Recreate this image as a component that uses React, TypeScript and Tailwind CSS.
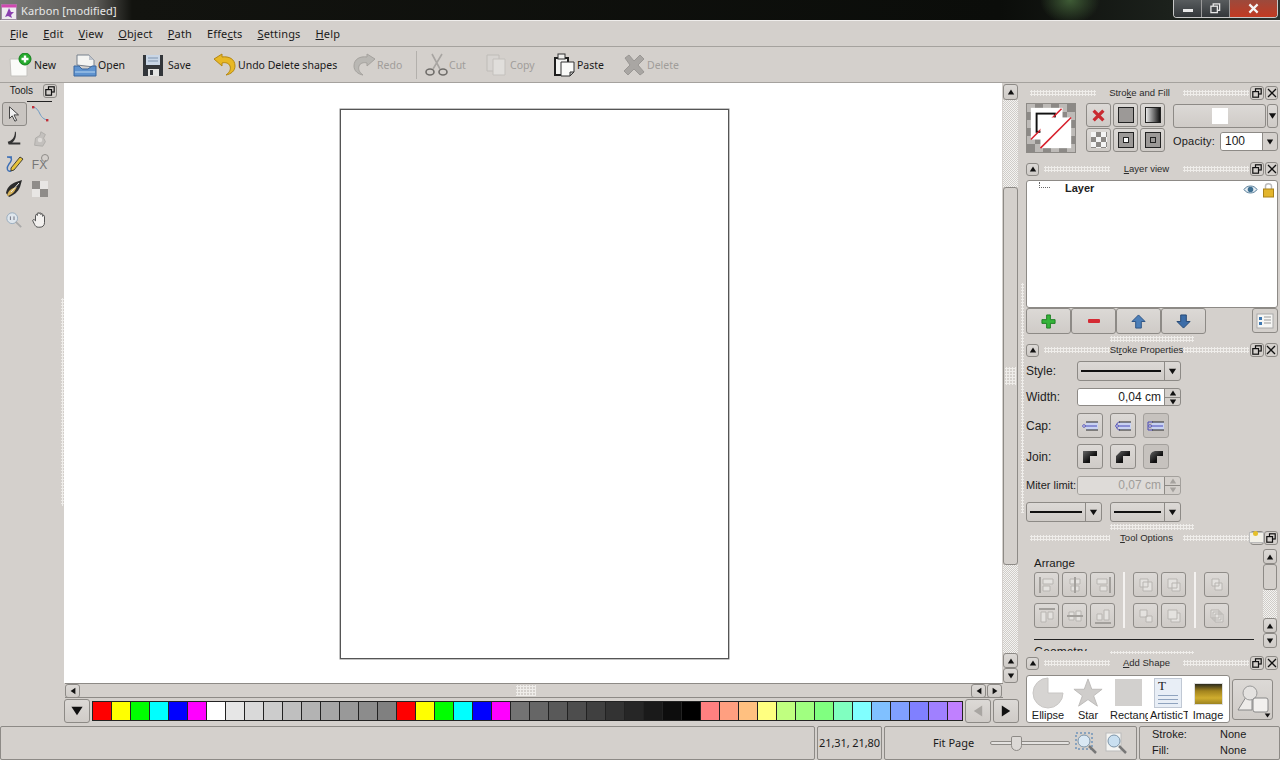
import type { ReactNode } from "react";

const btn = "border border-[#8d8a86] rounded-[3px] bg-[linear-gradient(#dcd9d6,#cfcbc7)] flex items-center justify-center shrink-0";
const grip = "bg-[radial-gradient(#efedea_1px,transparent_1.2px)] bg-[length:3px_3px]";
const hatch = "bg-[repeating-conic-gradient(#cfccc8_0_25%,#f4f3f1_0_50%)] bg-[length:2px_2px]";

function Tri({ dir = "down", color = "#111", size = 9 }: { dir?: "up" | "down" | "left" | "right"; color?: string; size?: number }) {
  const pts = { up: "1,8 5,2 9,8", down: "1,2 5,8 9,2", left: "8,1 2,5 8,9", right: "2,1 8,5 2,9" }[dir];
  return (
    <svg viewBox="0 0 10 10" width={size} height={size}>
      <polygon points={pts} fill={color} />
    </svg>
  );
}

function FloatIcon() {
  return (
    <svg viewBox="0 0 10 10" width="10" height="10" fill="none" stroke="#111" strokeWidth="1.2">
      <rect x="3.5" y="0.8" width="5.7" height="5.2" />
      <rect x="0.8" y="3.6" width="5.7" height="5.6" fill="#d4d0cc" />
    </svg>
  );
}

function CloseIcon() {
  return (
    <svg viewBox="0 0 10 10" width="10" height="10" stroke="#111" strokeWidth="1.3">
      <path d="M1 1L9 9M9 1L1 9" />
    </svg>
  );
}

function DockTitle({ title, collapse = true, close = true, leftDots = "w-[66px]" }: { title: [string, string, string]; collapse?: boolean; close?: boolean; leftDots?: string }) {
  return (
    <div className="h-[14px] flex items-center text-[9.5px] leading-[14px] text-[#2b2b2b] shrink-0">
      {collapse && (
        <div className={`${btn} w-[13px] h-[13px]`}>
          <Tri dir="up" size={8} />
        </div>
      )}
      <div className={`${grip} h-[6px] ${leftDots} ${collapse ? "ml-[5px]" : "ml-[4px]"}`} />
      <div className="flex-1 text-center whitespace-nowrap">
        {title[0]}
        <span className="underline">{title[1]}</span>
        {title[2]}
      </div>
      <div className={`${grip} h-[6px] w-[66px] mr-[1px]`} />
      <div className={`${btn} w-[14px] h-[14px] bg-none`}>
        <FloatIcon />
      </div>
      {close ? (
        <div className={`${btn} w-[13px] h-[14px] ml-[1px] bg-none`}>
          <CloseIcon />
        </div>
      ) : (
        <div className="w-[14px]" />
      )}
    </div>
  );
}

function LineSelect({ w }: { w: string }) {
  return (
    <div className={`${btn} ${w} h-[20px]`}>
      <div className="flex-1 h-[2px] bg-[#111] mx-[3px]" />
      <div className="w-[16px] h-full border-l border-[#8d8a86] flex items-center justify-center">
        <Tri size={9} />
      </div>
    </div>
  );
}

function Spin({ disabled }: { disabled?: boolean }) {
  const c = disabled ? "#a5a29e" : "#111";
  return (
    <div className="w-[16px] h-full border-l border-[#8d8a86] flex flex-col">
      <div className="flex-1 flex items-center justify-center border-b border-[#8d8a86]">
        <Tri dir="up" size={8} color={c} />
      </div>
      <div className="flex-1 flex items-center justify-center">
        <Tri size={8} color={c} />
      </div>
    </div>
  );
}

function I({ children, s = 24 }: { children: ReactNode; s?: number }) {
  return (
    <svg viewBox="0 0 24 24" width={s} height={s} className="shrink-0">
      {children}
    </svg>
  );
}

const toolbar: { label: string; w: string; off?: boolean; icon: ReactNode }[] = [
  {
    label: "New", w: "w-[64px]",
    icon: (
      <I>
        <path d="M1 6H13L18 11V23H2Z" fill="#fbfbf9" stroke="#c4c2be" />
        <circle cx="16" cy="6" r="6" fill="#25a92c" stroke="#13801b" />
        <path d="M16 2.5V9.5M12.5 6H19.5" stroke="#fff" strokeWidth="2.4" />
      </I>
    ),
  },
  {
    label: "Open", w: "w-[70px]",
    icon: (
      <I>
        <path d="M4 12V2H16L21 7V14Z" fill="#f4f4f2" stroke="#77808c" />
        <path d="M16 2V7H21Z" fill="#bfc4cc" />
        <path d="M1 13H6L9 16H15L19 13H23V23H1Z" fill="#5f93cf" stroke="#3b679e" />
        <path d="M2 19H22" stroke="#8cb5e0" strokeWidth="2" />
      </I>
    ),
  },
  {
    label: "Save", w: "w-[70px]",
    icon: (
      <I>
        <path d="M0 2H20V23H0Z" fill="#33363a" />
        <rect x="3" y="2" width="14" height="10" fill="#c9d6e6" />
        <path d="M5 5H15M5 8H15" stroke="#7e93ad" />
        <rect x="5" y="16" width="11" height="7" fill="#e4e4e2" />
        <rect x="7" y="17" width="3" height="5" fill="#33363a" />
      </I>
    ),
  },
  {
    label: "Undo Delete shapes", w: "w-[139px]",
    icon: (
      <I>
        <path d="M1 6L9 1V4C16 3 22 6 22 13C22 18 18 21 13 22C17 19 18 16 17 13C16 10 12 9 9 10V13Z" fill="#e8b825" stroke="#b48712" />
      </I>
    ),
  },
  {
    label: "Redo", w: "w-[64px]", off: true,
    icon: (
      <I>
        <path d="M23 6L15 1V4C8 3 2 6 2 13C2 18 6 21 11 22C7 19 6 16 7 13C8 10 12 9 15 10V13Z" fill="#b9b7b3" stroke="#a5a29e" />
      </I>
    ),
  },
];

const toolbar2: { label: string; w: string; off?: boolean; icon: ReactNode }[] = [
  {
    label: "Cut", w: "w-[61px]", off: true,
    icon: (
      <I>
        <path d="M8 1L16 16M18 1L9 16" stroke="#a8a5a2" strokeWidth="1.6" fill="none" />
        <ellipse cx="6" cy="19" rx="4" ry="3" fill="none" stroke="#6f6d6a" strokeWidth="1.6" />
        <ellipse cx="19" cy="19" rx="4" ry="3" fill="none" stroke="#6f6d6a" strokeWidth="1.6" />
      </I>
    ),
  },
  {
    label: "Copy", w: "w-[67px]", off: true,
    icon: (
      <I>
        <path d="M2 2H14V18H2Z" fill="#d7d4d1" stroke="#bfbcb8" />
        <path d="M8 6H20V22H8Z" fill="#e0dedb" stroke="#c3c0bc" />
      </I>
    ),
  },
  {
    label: "Paste", w: "w-[70px]",
    icon: (
      <I>
        <path d="M2 4H17V23H2Z" fill="#1e1e1e" />
        <path d="M4 6H15V21H4Z" fill="#f3f3f1" />
        <rect x="6" y="1" width="7" height="5" fill="#efefed" stroke="#333" />
        <path d="M9 9H22V19L18 23H9Z" fill="#fafaf8" stroke="#333" />
        <path d="M22 19H18V23Z" fill="#bbb" stroke="#333" />
      </I>
    ),
  },
  {
    label: "Delete", w: "w-[60px]", off: true,
    icon: (
      <I>
        <path d="M3 5L7 2L12 8L18 2L22 6L16 12L22 19L18 22L12 16L6 22L2 18L8 12Z" fill="#a9a6a3" stroke="#9a9794" />
      </I>
    ),
  },
];

function ToolItem({ it }: { it: { label: string; w: string; off?: boolean; icon: ReactNode } }) {
  return (
    <div className={`${it.w} flex items-center gap-[1px] shrink-0`}>
      {it.icon}
      <span className={`text-[10.5px] whitespace-nowrap mt-[2px] ${it.off ? "text-[#a09d9a]" : "text-[#1a1a1a]"}`}>{it.label}</span>
    </div>
  );
}

const leftTools: ReactNode[] = [
  <svg key="a" viewBox="0 0 20 20" width="18" height="18"><path d="M5 2L15 11H10L13 17L11 18L8 12L5 15Z" fill="#f0f0f0" stroke="#333" /></svg>,
  <svg key="b" viewBox="0 0 20 20" width="20" height="20"><path d="M3 3C7 4 8 6 10 10C12 14 14 15 17 16" fill="none" stroke="#6d9ac4" strokeWidth="1" /><rect x="2" y="2" width="2.4" height="2.4" fill="#c0303a" /><rect x="16" y="15" width="2.4" height="2.4" fill="#c0303a" /></svg>,
  <svg key="c" viewBox="0 0 20 20" width="18" height="18"><path d="M11 2C11 8 8 12 3 13L4 16H17V14H8C11 12 13 7 12 2Z" fill="#333" /></svg>,
  <svg key="d" viewBox="0 0 20 20" width="18" height="18"><path d="M4 17L5 9L10 6L11 2L16 5L14 9L16 13L13 18Z" fill="#c3c0bd" stroke="#aeaba8" /><circle cx="10" cy="11" r="2.5" fill="#dedbd8" /></svg>,
  <svg key="e" viewBox="0 0 20 20" width="20" height="20"><path d="M8 3H3C8 3 9 5 5 10C2 14 3 18 7 17" fill="none" stroke="#3d6fb5" strokeWidth="1.4" /><path d="M7 14L16 3L19 5L10 16L7 17Z" fill="#e7c33b" stroke="#222" strokeWidth="0.8" /></svg>,
  <span key="f" className="text-[12px] leading-none text-[#777] font-['Liberation_Sans'] relative mt-[3px]">FX<span className="absolute -top-[5px] right-[-2px] w-[8px] h-[8px] rounded-full border border-[#8f8c89]" /></span>,
  <svg key="g" viewBox="0 0 20 20" width="20" height="20"><path d="M2 14C3 8 7 5 12 3L18 1L16 8C14 13 10 16 5 18Z" fill="#2b2b2b" /><path d="M3 17C4 11 8 9 13 8L10 13C8 15 5 17 3 17Z" fill="#d6b35c" /><path d="M15 4L7 13" stroke="#eee" /></svg>,
  <div key="h" className="w-[16px] h-[16px] grid grid-cols-2 grid-rows-2">
    <div className="bg-[#8f8c89]" /><div className="bg-[#e8e6e4]" /><div className="bg-[#e8e6e4]" /><div className="bg-[#8f8c89]" />
  </div>,
];

const swatches = [
  "#ff0000", "#ffff00", "#00ff00", "#00ffff", "#0000ff", "#ff00ff", "#ffffff", "#e6e6e6", "#d9d9d9", "#cccccc", "#bfbfbf", "#b3b3b3", "#a6a6a6", "#999999", "#8c8c8c", "#808080",
  "#ff0000", "#ffff00", "#00ff00", "#00ffff", "#0000ff", "#ff00ff", "#737373", "#666666", "#595959", "#4d4d4d", "#404040", "#333333", "#262626", "#1a1a1a", "#0d0d0d", "#000000",
  "#ff8080", "#ff9f80", "#ffc080", "#ffff80", "#c0ff80", "#a0ff80", "#80ff80", "#80ffc0", "#80ffff", "#80c0ff", "#80a0ff", "#8080ff", "#a080ff", "#c080ff",
];

function ArrangeBtn({ bar, d }: { bar?: string; d: string }) {
  return (
    <div className={`${btn} w-[25px] h-[25px] border-[#8f8c88]`}>
      <svg viewBox="0 0 18 18" width="18" height="18">
        <path d={d} fill="#e4e2df" stroke="#b8b5b1" strokeWidth="1" />
        {bar && <path d={bar} stroke="#a3a09c" strokeWidth="2" fill="none" />}
      </svg>
    </div>
  );
}

function CapBtn({ d, on }: { d?: string; on?: boolean }) {
  return (
    <div className={`${btn} w-[26px] h-[25px] ${on ? "bg-none bg-[#c6c2be] border-[#a3a09c]" : ""}`}>
      <svg viewBox="0 0 18 12" width="18" height="12" fill="none">
        <rect x="5" y="2" width="12" height="8" fill="#c9d3f2" />
        {d && <path d={d} stroke="#4a4ab8" strokeWidth="1" />}
        <path d="M5 2H17M5 10H17" stroke="#2a2a2a" strokeWidth="1" />
        <path d="M3 6H16" stroke="#4a4ab8" />
        <circle cx="3" cy="6" r="1.3" fill="#fff" stroke="#3434b0" strokeWidth="0.8" />
      </svg>
    </div>
  );
}

function JoinBtn({ d, on }: { d: string; on?: boolean }) {
  return (
    <div className={`${btn} w-[26px] h-[25px] ${on ? "bg-none bg-[#c6c2be] border-[#a3a09c]" : ""}`}>
      <svg viewBox="0 0 16 16" width="16" height="16">
        <defs>
          <linearGradient id="jg" x1="0" y1="0" x2="1" y2="1">
            <stop offset="0" stopColor="#666" />
            <stop offset="0.6" stopColor="#111" />
          </linearGradient>
        </defs>
        <path d={d} fill="url(#jg)" />
      </svg>
    </div>
  );
}

export default function App() {
  return (
    <div className="w-[1280px] h-[760px] overflow-hidden flex flex-col bg-[#d4d0cc] font-['Noto_Sans','Liberation_Sans',sans-serif] text-[#1a1a1a]">
      {/* window title */}
      <div className="h-[20px] flex shrink-0 bg-[radial-gradient(ellipse_30px_24px_at_1070px_0px,#3f5c36_0,transparent_100%),linear-gradient(90deg,#7a7a78_0,#5c5b57_95px,#12130f_132px,#0b0d0a_1000px,#1c211c_1170px,#2c3430_1280px)]">
        <svg viewBox="0 0 16 16" width="16" height="16" className="mt-[4px] ml-[1px] shrink-0">
          <rect x="0.5" y="0.5" width="15" height="15" fill="#eeeaf0" stroke="#9a8aa0" />
          <rect x="0.5" y="0.5" width="15" height="3" fill="#d048b0" />
          <path d="M8 4L10 8L13 8L10 11L11 14L7 12L4 13L6 9Z" fill="#8a3fb0" />
        </svg>
        <span className="ml-[4px] text-[11px] tracking-[0.1px] leading-[22px] text-[#e8e8e8]">Karbon [modified]</span>
        <div className="ml-auto mr-[2px] flex h-[18px] border border-t-0 border-[#c8c8c8] rounded-b-[4px] overflow-hidden">
          <div className="w-[28px] border-r border-[#9a9a9a] bg-[linear-gradient(#585c5e,#33373a)] flex items-center justify-center">
            <div className="w-[10px] h-[3px] bg-[#e8e8e8] mt-[4px]" />
          </div>
          <div className="w-[28px] border-r border-[#9a9a9a] bg-[linear-gradient(#585c5e,#33373a)] flex items-center justify-center">
            <svg viewBox="0 0 12 12" width="11" height="11" fill="none" stroke="#e8e8e8" strokeWidth="1.4"><rect x="3.5" y="1" width="7" height="7" /><rect x="1" y="3.5" width="7" height="7" fill="#43474a" /></svg>
          </div>
          <div className="w-[47px] bg-[linear-gradient(#9c4a3c,#c23a22)] flex items-center justify-center">
            <svg viewBox="0 0 12 12" width="11" height="11" stroke="#f4f4f4" strokeWidth="2.4"><path d="M1.5 1.5L10.5 10.5M10.5 1.5L1.5 10.5" /></svg>
          </div>
        </div>
      </div>
      <div className="h-[1px] bg-[#f0eeec] shrink-0" />

      {/* menu */}
      <div className="h-[26px] flex items-center pl-[10px] pt-[1px] gap-[15px] text-[11px] tracking-[0.15px] border-b border-[#a5a29e] shrink-0">
        <span><u>F</u>ile</span>
        <span><u>E</u>dit</span>
        <span><u>V</u>iew</span>
        <span><u>O</u>bject</span>
        <span><u>P</u>ath</span>
        <span>Effe<u>c</u>ts</span>
        <span><u>S</u>ettings</span>
        <span><u>H</u>elp</span>
      </div>

      {/* toolbar */}
      <div className="h-[36px] flex items-center pl-[9px] border-b border-[#a5a29e] shrink-0">
        {toolbar.map((it) => <ToolItem key={it.label} it={it} />)}
        <div className="w-[1px] h-[28px] bg-[#f2f0ee] border-l border-[#b3b0ac] mr-[7px] shrink-0" />
        {toolbar2.map((it) => <ToolItem key={it.label} it={it} />)}
      </div>

      <div className="flex-1 min-h-0 flex">
        {/* tools dock */}
        <div className="w-[64px] shrink-0 flex">
          <div className="w-[58px] shrink-0">
            <div className="h-[18px] flex items-start pt-[1px] justify-end gap-[10px] pr-[1px] text-[10px] leading-[14px] font-['Liberation_Sans',sans-serif]">
              <span>Tools</span>
              <div className={`${btn} w-[14px] h-[14px] bg-none`}><FloatIcon /></div>
            </div>
            <div className="grid grid-cols-[26px_25px] auto-rows-[25px] ml-[1px] items-center justify-items-center">
              <div className="w-[25px] h-[24px] border border-[#8d8a86] rounded-[3px] bg-[#c9c5c1] flex items-center justify-center">{leftTools[0]}</div>
              <div className="border-t border-[#222] w-full h-full flex items-center justify-center">{leftTools[1]}</div>
              {leftTools.slice(2)}
              <svg viewBox="0 0 20 20" width="18" height="18" className="mt-[12px]"><circle cx="8" cy="8" r="6" fill="#dfe6ec" stroke="#94a9bd" /><path d="M12 12L18 18" stroke="#aaa" strokeWidth="2" /><path d="M6 6V10M10 6V10" stroke="#667" /></svg>
              <svg viewBox="0 0 20 20" width="18" height="18" className="mt-[12px]"><path d="M5 11V5C5 3.5 7 3.5 7 5V3C7 1.5 9 1.5 9 3V3C9 1.5 11 1.5 11 3V4C11 2.5 13 2.5 13 4V6C13 4.5 15 4.5 15 6V13C15 16 13 18 10 18H8C6 18 5 17 4 15L2 11C1.5 9.5 3.5 9 4 10Z" fill="#f2f0ee" stroke="#444" /></svg>
            </div>
          </div>
          <div className="flex-1 flex items-center">
            <div className={`${grip} w-[3px] h-[208px] ml-[3px] mt-[-6px]`} />
          </div>
        </div>

        {/* canvas column */}
        <div className="w-[955px] shrink-0 flex flex-col">
          <div className="h-[600px] flex shrink-0">
            <div className="w-[938px] bg-white pl-[276px] pt-[26px] shrink-0">
              <div className="w-[389px] h-[550px] border border-[#555] bg-white shadow-[0_0_0_0.5px_#888]" />
            </div>
            <div className="flex-1 flex flex-col items-center">
              <div className={`${btn} w-[15px] h-[16px] mt-[1px]`}><Tri dir="up" size={8} /></div>
              <div className={`${hatch} w-[15px] h-[87px]`} />
              <div className={`${btn} w-[15px] h-[378px] flex-col bg-none bg-[#d4d0cc]`}>
                <div className={`${grip} w-[11px] h-[18px]`} />
              </div>
              <div className={`${hatch} w-[15px] flex-1`} />
              <div className={`${btn} w-[15px] h-[15px]`}><Tri dir="up" size={8} /></div>
              <div className={`${btn} w-[15px] h-[15px]`}><Tri size={8} /></div>
            </div>
          </div>
          <div className="h-[15px] flex items-center border-y border-[#8d8a86] ml-[1px] mr-[16px] shrink-0 pr-[1px]">
            <div className={`${btn} w-[15px] h-[14px]`}><Tri dir="left" size={8} /></div>
            <div className="flex-1 flex justify-center">
              <div className={`${grip} w-[20px] h-[11px]`} />
            </div>
            <div className={`${btn} w-[15px] h-[14px]`}><Tri dir="left" size={8} /></div>
            <div className={`${btn} w-[15px] h-[14px] ml-[1px]`}><Tri dir="right" size={8} /></div>
          </div>
          <div className="flex items-center mt-[1px] h-[24px] shrink-0">
            <div className={`${btn} w-[26px] h-[24px]`}><Tri size={14} /></div>
            <div className="ml-[2px] w-[871px] h-[20px] flex overflow-hidden border border-[#222] shrink-0">
              {swatches.map((c, i) => (
                <div key={i} className="w-[19px] shrink-0 border-r border-[#222]" style={{ backgroundColor: c }} />
              ))}
            </div>
            <div className={`${btn} w-[26px] h-[24px] ml-[2px]`}><Tri dir="left" size={14} color="#a9a6a2" /></div>
            <div className={`${btn} w-[26px] h-[24px] ml-[2px]`}><Tri dir="right" size={14} /></div>
          </div>
        </div>

        {/* right docks */}
        <div className="flex-1 min-w-0 flex flex-col pl-[7px] pr-[2px] pt-[3px] text-[11px] font-['Liberation_Sans',sans-serif] relative">
          <div className={`${grip} absolute left-[2px] top-[200px] w-[3px] h-[230px]`} />

          <DockTitle title={["Stro", "k", "e and Fill"]} collapse={false} />
          <div className="h-[62px] flex pt-[3px] shrink-0">
            <div className="w-[50px] h-[50px] border border-[#8d8a86] bg-[repeating-conic-gradient(#8c8986_0_25%,#bdbab7_0_50%)] bg-[length:16px_16px] flex shrink-0">
              <svg viewBox="0 0 50 50" width="48" height="48">
                <rect x="4" y="4" width="33" height="33" fill="#fff" />
                <rect x="10" y="10" width="19" height="19" fill="none" stroke="#111" strokeWidth="2" />
                <path d="M4 37L36 5" stroke="#d8202c" strokeWidth="1.6" />
                <rect x="14" y="14" width="32" height="32" fill="#fff" />
                <path d="M14 46L46 14" stroke="#d8202c" strokeWidth="1.6" />
              </svg>
            </div>
            <div className="ml-[10px] grid grid-cols-[25px_25px_25px] auto-rows-[24px] gap-x-[2px] gap-y-[1px] shrink-0 h-[49px]">
              <div className={`${btn}`}><svg viewBox="0 0 12 12" width="13" height="13" stroke="#c92a30" strokeWidth="3"><path d="M1.5 1.5L10.5 10.5M10.5 1.5L1.5 10.5" /></svg></div>
              <div className={`${btn}`}><div className="w-[16px] h-[16px] bg-[#9c9997] border border-[#222]" /></div>
              <div className={`${btn}`}><div className="w-[16px] h-[16px] bg-[linear-gradient(90deg,#e8e8e8,#111)] border border-[#222]" /></div>
              <div className={`${btn}`}><div className="w-[16px] h-[16px] bg-[repeating-conic-gradient(#8c8986_0_25%,#f4f4f4_0_50%)] bg-[length:10px_10px]" /></div>
              <div className={`${btn}`}><div className="w-[16px] h-[16px] bg-[#9c9997] border border-[#222] flex items-center justify-center"><div className="w-[6px] h-[6px] bg-white border border-[#222]" /></div></div>
              <div className={`${btn}`}><div className="w-[16px] h-[16px] bg-[#9c9997] border border-[#222] flex items-center justify-center"><div className="w-[6px] h-[6px] bg-[#9c9997] border border-[#222]" /></div></div>
            </div>
            <div className="ml-[8px] flex-1">
              <div className="flex h-[24px] mt-[1px]">
                <div className={`${btn} w-[93px] h-[24px]`}><div className="w-[16px] h-[16px] bg-white" /></div>
                <div className={`${btn} w-[11px] h-[24px] ml-[1px]`}><Tri size={10} /></div>
              </div>
              <div className="flex items-center mt-[4px] h-[19px]">
                <span className="w-[47px] text-[11px] tracking-[0.2px]">Opacity:</span>
                <div className="w-[58px] h-[19px] border border-[#8d8a86] rounded-[3px] flex items-center overflow-hidden">
                  <div className="flex-1 bg-white h-full pl-[4px] text-[12px] leading-[17px]">100</div>
                  <div className="w-[15px] h-full border-l border-[#8d8a86] flex items-center justify-center"><Tri size={8} /></div>
                </div>
              </div>
            </div>
          </div>

          <DockTitle title={["", "L", "ayer view"]} />
          <div className="h-[4px] shrink-0" />
          <div className="h-[128px] bg-white border border-[#8d8a86] rounded-[3px] flex items-start pl-[4px] pr-[2px] pt-[1px] shrink-0">
            <div className="w-[11px] h-[6px] border-l border-b border-dotted border-[#666] ml-[8px]" />
            <span className="ml-[15px] font-bold text-[11px] text-[#222] leading-[13px]">Layer</span>
            <svg viewBox="0 0 16 14" width="15" height="13" className="ml-auto mt-[1px]"><path d="M1 7C4 2 12 2 15 7C12 12 4 12 1 7Z" fill="#e6eef4" stroke="#4a7290" /><circle cx="8" cy="7" r="3" fill="#3d6f92" /></svg>
            <svg viewBox="0 0 12 16" width="13" height="16" className="ml-[4px]"><path d="M3 7V4C3 1 9 1 9 4V7" fill="none" stroke="#bbb" strokeWidth="1.5" /><rect x="1" y="7" width="10" height="8" fill="#e3b52c" stroke="#a9821a" /></svg>
          </div>
          <div className="flex h-[26px] shrink-0">
            {[
              <svg key="1" viewBox="0 0 16 16" width="15" height="15"><path d="M6 1H10V6H15V10H10V15H6V10H1V6H6Z" fill="#35b43a" stroke="#1a7f20" /></svg>,
              <div key="2" className="w-[12px] h-[4px] rounded-[1px] bg-[#d52b34]" />,
              <svg key="3" viewBox="0 0 16 16" width="15" height="15"><path d="M8 1L15 8H11V15H5V8H1Z" fill="#4d7fb8" stroke="#2b5183" /></svg>,
              <svg key="4" viewBox="0 0 16 16" width="15" height="15"><path d="M8 15L15 8H11V1H5V8H1Z" fill="#3c6da8" stroke="#234673" /></svg>,
            ].map((c, i) => (
              <div key={i} className={`${btn} w-[45px] h-[26px]`}>{c}</div>
            ))}
            <div className={`${btn} w-[26px] h-[25px] ml-auto bg-none`}>
              <svg viewBox="0 0 18 16" width="18" height="16"><rect x="1" y="1" width="16" height="14" fill="#f6f6f4" stroke="#aaa" /><rect x="3" y="4" width="3" height="3" fill="#3e77b0" /><rect x="3" y="9" width="3" height="3" fill="#3e77b0" /><path d="M8 4H15M8 7H15M8 10H15" stroke="#999" /></svg>
            </div>
          </div>
          <div className="h-[9px] flex items-center justify-center shrink-0"><div className={`${grip} h-[6px] w-[84px]`} /></div>
          <DockTitle title={["St", "r", "oke Properties"]} />

          <div className="text-[12px] text-[#222] flex flex-col shrink-0">
            <div className="h-[4px]" />
            <div className="h-[20px] flex items-center">
              <span className="w-[51px]">Style:</span>
              <LineSelect w="w-[104px]" />
            </div>
            <div className="h-[7px]" />
            <div className="h-[18px] flex items-center">
              <span className="w-[51px]">Width:</span>
              <div className="w-[104px] h-[18px] border border-[#8d8a86] rounded-[3px] flex overflow-hidden">
                <div className="flex-1 bg-white text-right pr-[3px] leading-[16px]">0,04 cm</div>
                <Spin />
              </div>
            </div>
            <div className="h-[7px]" />
            <div className="h-[25px] flex items-center">
              <span className="w-[51px]">Cap:</span>
              <div className="flex gap-[7px]">
                <CapBtn />
                <CapBtn d="M6 2C1 2 1 10 6 10" />
                <CapBtn on d="M6 2H1V10H6" />
              </div>
            </div>
            <div className="h-[6px]" />
            <div className="h-[25px] flex items-center">
              <span className="w-[51px]">Join:</span>
              <div className="flex gap-[7px]">
                <JoinBtn d="M1 2H15V7H8V14H1Z" />
                <JoinBtn d="M6 2H15V7H8V14H1V7Z" />
                <JoinBtn on d="M8 2H15V7H9V14H2V8C2 4 5 2 8 2Z" />
              </div>
            </div>
            <div className="h-[7px]" />
            <div className="h-[19px] flex items-center">
              <span className="w-[51px] whitespace-nowrap text-[11px]">Miter limit:</span>
              <div className="w-[104px] h-[19px] border border-[#a3a09c] rounded-[3px] flex overflow-hidden">
                <div className="flex-1 bg-[#dedbd8] text-[#a09d9a] text-right pr-[3px] leading-[17px]">0,07 cm</div>
                <Spin disabled />
              </div>
            </div>
            <div className="h-[7px]" />
            <div className="flex gap-[8px]">
              <LineSelect w="w-[76px]" />
              <LineSelect w="w-[71px]" />
            </div>
          </div>

          <div className="h-[9px] flex items-center justify-center shrink-0"><div className={`${grip} h-[6px] w-[84px]`} /></div>
          <div className="relative">
            <DockTitle title={["", "T", "ool Options"]} collapse={false} close={false} leftDots="w-[80px]" />
            <div className="absolute right-[14px] top-[1px] w-[15px] h-[11px] bg-[#f2f0e8] border border-[#bbb]">
              <div className="absolute -top-[2px] left-[3px] w-[5px] h-[5px] rounded-full bg-[#e6c02a]" />
            </div>
            <div className={`${btn} absolute right-0 top-0 w-[14px] h-[14px] bg-none`}><FloatIcon /></div>
          </div>
          <div className="h-[106px] flex shrink-0 overflow-hidden">
            <div className="flex-1 pl-[8px] text-[11px]">
              <div className="h-[26px] pt-[12px] leading-[14px] mt-[-1px] text-[11.5px]">Arrange</div>
              <div className="flex h-[56px] mt-[2px]">
                <div className="grid grid-cols-3 gap-x-[3px] gap-y-[6px] w-[81px]">
                  <ArrangeBtn bar="M2 1V17" d="M5 3H15V8H5ZM5 10H12V15H5Z" />
                  <ArrangeBtn bar="M9 1V17" d="M4 3H14V8H4ZM5 10H13V15H5Z" />
                  <ArrangeBtn bar="M16 1V17" d="M3 3H13V8H3ZM6 10H13V15H6Z" />
                  <ArrangeBtn bar="M1 2H17" d="M3 5H8V15H3ZM10 5H15V12H10Z" />
                  <ArrangeBtn bar="M1 9H17" d="M3 5H8V13H3ZM10 4H15V14H10Z" />
                  <ArrangeBtn bar="M1 16H17" d="M3 7H8V13H3ZM10 3H15V13H10Z" />
                </div>
                <div className="w-[2px] h-[56px] bg-[#f4f2f0] ml-[8px] mr-[8px]" />
                <div className="grid grid-cols-2 gap-x-[3px] gap-y-[6px] w-[53px]">
                  <ArrangeBtn d="M6 6H15V15H6ZM3 3H11V11H3Z" />
                  <ArrangeBtn d="M3 3H12V12H3ZM7 7H15V15H7Z" />
                  <ArrangeBtn d="M3 3H10V10H3ZM9 9H15V15H9Z" />
                  <ArrangeBtn d="M3 3H12V12H3ZM12 6H15V15H6V12" />
                </div>
                <div className="w-[2px] h-[56px] bg-[#f4f2f0] ml-[8px] mr-[8px]" />
                <div className="flex flex-col gap-[6px]">
                  <ArrangeBtn d="M4 3H11V10H4ZM7 7H14V14H7Z" />
                  <ArrangeBtn d="M3 3H11V11H3ZM7 7H15V15H7ZM5 5H13V13H5Z" />
                </div>
              </div>
              <div className="h-[1px] bg-[#222] mt-[11px] mr-[9px]" />
              <div className="leading-[14px] mt-[5px] text-[12px]">Geometry</div>
            </div>
            <div className="w-[14px] mr-[1px] flex flex-col mt-[4px]">
              <div className={`${btn} w-[14px] h-[15px]`}><Tri dir="up" size={8} /></div>
              <div className={`${btn} w-[14px] h-[26px] bg-none`} />
              <div className={`${hatch} w-[14px] h-[28px] shrink-0`} />
              <div className={`${btn} w-[14px] h-[15px]`}><Tri dir="up" size={8} /></div>
              <div className={`${btn} w-[14px] h-[15px]`}><Tri size={8} /></div>
            </div>
          </div>
          <div className="h-[5px] flex items-start justify-center shrink-0"><div className={`${grip} h-[3px] w-[84px]`} /></div>
          <DockTitle title={["", "A", "dd Shape"]} />
          <div className="flex items-center mt-[5px]">
            <div className="w-[204px] h-[48px] bg-white border border-[#8d8a86] rounded-[3px] flex overflow-hidden pl-[1px] shrink-0 text-[11px]">
              {[
                { name: "Ellipse", icon: <svg viewBox="0 0 32 32" width="32" height="32"><path d="M16 1A15 15 0 1 0 31 16H16Z" fill="#d6d4d2" stroke="#c8c6c4" /></svg> },
                { name: "Star", icon: <svg viewBox="0 0 32 32" width="30" height="30"><path d="M16 1L20 12L31 12L22 19L26 30L16 23L6 30L10 19L1 12L12 12Z" fill="#cfcdcb" stroke="#bcbab8" /></svg> },
                { name: "Rectangle", icon: <div className="w-[27px] h-[27px] bg-[#d2d0ce]" /> },
                { name: "ArtisticText", icon: <div className="w-[28px] h-[30px] bg-[#e8eef6] border border-[#c0c8d4] text-[13px] leading-[13px] font-['Liberation_Serif',serif] pl-[3px] text-[#222]">T<div className="h-[1px] bg-[#8fa3be] mt-[3px] mr-[3px]" /><div className="h-[1px] bg-[#8fa3be] mt-[3px] mr-[3px]" /><div className="h-[1px] bg-[#8fa3be] mt-[3px] mr-[3px]" /></div> },
                { name: "Image", icon: <div className="w-[29px] h-[22px] border border-[#ddd] bg-[linear-gradient(#2b2a1c,#a3841e_35%,#d0ad2e_70%,#9c8320)] mt-[3px]" /> },
              ].map((s) => (
                <div key={s.name} className="w-[40px] shrink-0 flex flex-col items-center overflow-hidden">
                  <div className="h-[33px] flex items-center justify-center shrink-0">{s.icon}</div>
                  <div className={`whitespace-nowrap leading-[13px] ${s.name.length > 7 ? "self-start pl-[2px]" : ""}`}>{s.name}</div>
                </div>
              ))}
            </div>
            <div className={`${btn} w-[41px] h-[41px] ml-[2px] relative`}>
              <svg viewBox="0 0 32 32" width="32" height="32"><path d="M1 27L9 14H15V27Z" fill="#eeecea" stroke="#888" /><circle cx="13" cy="10" r="7" fill="#e4e2e0" stroke="#999" /><rect x="16" y="15" width="15" height="14" rx="2" fill="#f2f0ee" stroke="#888" /></svg>
              <div className="absolute right-[1px] bottom-0"><Tri size={7} /></div>
            </div>
          </div>
        </div>
      </div>

      {/* status bar */}
      <div className="h-[34px] flex gap-[2px] shrink-0 text-[11px] mt-[-1px]">
        <div className="w-[815px] border border-[#8d8a86] rounded-[2px]" />
        <div className="w-[65px] border border-[#8d8a86] rounded-[2px] flex items-center justify-center whitespace-nowrap tracking-[-0.1px]">21,31, 21,80</div>
        <div className="w-[253px] border border-[#8d8a86] rounded-[2px] flex items-center pl-[48px]">
          <span className="whitespace-nowrap">Fit Page</span>
          <div className="w-[80px] h-[4px] ml-[16px] border border-[#8d8a86] rounded-[2px] bg-[#e4e2e0] flex items-center pl-[20px] shrink-0">
            <div className="w-[11px] h-[15px] border border-[#8d8a86] rounded-b-[6px] rounded-t-[2px] bg-[#dcd9d6] shrink-0" />
          </div>
          <svg viewBox="0 0 24 24" width="24" height="24" className="ml-[4px] shrink-0"><rect x="2" y="2" width="16" height="16" fill="none" stroke="#3e77b0" strokeDasharray="2 2" /><circle cx="10" cy="10" r="6" fill="#d9e8f4" stroke="#7c94a8" /><path d="M15 15L22 22" stroke="#777" strokeWidth="2.5" /></svg>
          <svg viewBox="0 0 24 24" width="24" height="24" className="ml-[6px] shrink-0"><rect x="2" y="2" width="15" height="18" fill="#f4f4f2" stroke="#bbb" /><circle cx="10" cy="10" r="6" fill="#c9dff0" stroke="#7c94a8" /><path d="M15 15L22 22" stroke="#777" strokeWidth="2.5" /></svg>
        </div>
        <div className="flex-1 border border-[#8d8a86] rounded-[2px] pl-[12px] pb-[2px] text-[11px] font-['Liberation_Sans',sans-serif] grid grid-cols-[68px_1fr] content-center leading-[16px]">
          <span>Stroke:</span><span>None</span>
          <span>Fill:</span><span>None</span>
        </div>
      </div>
    </div>
  );
}
